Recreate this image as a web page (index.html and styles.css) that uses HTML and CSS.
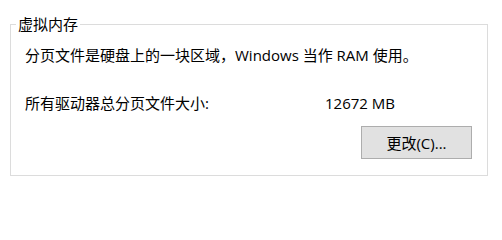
FILE: index.html
```html
<!DOCTYPE html>
<html lang="zh-CN">
<head>
<meta charset="utf-8">
<link rel="stylesheet" href="styles.css">
</head>
<body>
<fieldset class="group">
  <legend class="group-title">虚拟内存</legend>
  <p class="desc">分页文件是硬盘上的一块区域，Windows 当作 RAM 使用。</p>
  <div class="total">
    <span class="total-label">所有驱动器总分页文件大小:</span>
    <span class="total-value">12672 MB</span>
  </div>
  <div class="actions">
    <button class="btn" type="button">更改(C)...</button>
  </div>
</fieldset>
</body>
</html>
```
FILE: styles.css
```css
html, body {
  margin: 0;
  padding: 0;
  background: #ffffff;
}
body {
  font-family: "Open Sans", "Noto Sans CJK SC", sans-serif;
  font-size: 15px;
  line-height: 20px;
  color: #000000;
}
.group {
  box-sizing: border-box;
  width: 478px;
  margin: 14px 0 0 10px;
  padding: 0 15px 16px 14px;
  border: 1px solid #dcdcdc;
  min-width: 0;
}
.group-title {
  margin-left: -9px;
  padding: 0 2px;
  line-height: 20px;
}
.desc {
  margin: 11px 0 0 0;
}
.total {
  display: grid;
  grid-template-columns: 300px auto;
  margin-top: 28px;
}
.actions {
  display: flex;
  justify-content: flex-end;
  margin-top: 13px;
}
.btn {
  box-sizing: border-box;
  width: 111px;
  height: 33px;
  margin: 0;
  padding: 0;
  font: inherit;
  color: #000000;
  background: #e1e1e1;
  border: 1px solid #adadad;
  border-radius: 0;
}
```
